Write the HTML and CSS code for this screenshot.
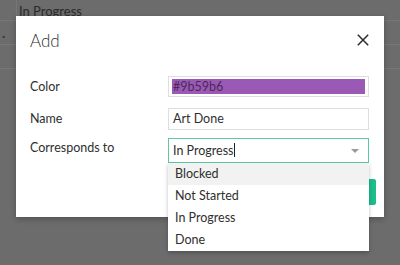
FILE: index.html
```html
<!DOCTYPE html>
<html lang="en">
<head>
  <meta charset="UTF-8">
  <meta name="viewport" content="width=device-width, initial-scale=1.0">
  <title>Add status</title>
  <link rel="stylesheet" href="styles.css">
</head>
<body>
  <div class="backdrop">
    <div class="bg-row first"><span class="bg-cell bg-first"></span><span class="bg-cell">In Progress</span></div>
    <div class="bg-row"><span class="bg-cell bg-first">·</span><span class="bg-cell"></span></div>
    <div class="bg-row"><span class="bg-cell bg-first"></span><span class="bg-cell"></span></div>
  </div>

  <div class="modal">
    <div class="modal-header">
      <span class="modal-title">Add</span>
      <svg class="close" width="12" height="12" viewBox="0 0 12 12">
        <path d="M0.8 0.8 L11.2 11.2 M11.2 0.8 L0.8 11.2" stroke="#2b2b2b" stroke-width="1.5" fill="none"/>
      </svg>
    </div>

    <div class="modal-body">
      <div class="form-row color-row">
        <label>Color</label>
        <div class="field color-field"><span class="swatch">#9b59b6</span></div>
      </div>
      <div class="form-row">
        <label>Name</label>
        <div class="field">Art Done</div>
      </div>
      <div class="form-row">
        <label class="top">Corresponds to</label>
        <div class="select-wrap">
          <div class="field select">In Progress<span class="cursor"></span>
            <span class="caret"></span>
          </div>
          <ul class="dropdown">
            <li class="active">Blocked</li>
            <li>Not Started</li>
            <li>In Progress</li>
            <li>Done</li>
          </ul>
        </div>
      </div>
    </div>

    <div class="modal-footer">
      <button class="btn-save">Save</button>
    </div>
  </div>
</body>
</html>
```

FILE: styles.css
```css
body {
  margin: 0;
  width: 400px;
  height: 265px;
  overflow: hidden;
  background: #6c6c6c;
  font-family: Lato, "Open Sans", "Liberation Sans", sans-serif;
  position: relative;
}

.bg-row {
  display: flex;
  height: 23px;
  border-bottom: 1px solid #767676;
}

.bg-row.first {
  height: 20px;
}

.bg-cell {
  font-size: 13px;
  color: #2b2b2b;
  padding-left: 2px;
  line-height: 22px;
}

.bg-first {
  width: 14px;
  border-right: 1px solid #767676;
  color: #333;
  line-height: 30px;
}

.modal {
  position: absolute;
  left: 16px;
  top: 16px;
  width: 368px;
  height: 201px;
  background: #ffffff;
  box-shadow: 0 2px 6px rgba(0, 0, 0, 0.25);
}

.modal-header {
  display: flex;
  align-items: center;
  justify-content: space-between;
  height: 48px;
  padding: 0 15px 0 14px;
}

.modal-title {
  font-size: 17px;
  font-weight: 300;
  color: #2f2f2f;
}

.modal-body {
  padding: 12px 15px 0 14px;
}

.form-row {
  display: flex;
  align-items: flex-start;
  margin-bottom: 8px;
}

.form-row.color-row {
  margin-bottom: 10px;
}

.form-row label {
  width: 138px;
  font-size: 12.5px;
  color: #2f2f2f;
  line-height: 22px;
}

.form-row label.top {
  line-height: 20px;
}

.field {
  box-sizing: border-box;
  width: 201px;
  height: 22px;
  border: 1px solid #dedede;
  font-size: 12.5px;
  color: #2f2f2f;
  padding: 0 4px;
  line-height: 20px;
}

.color-field {
  height: 21px;
  padding: 2px 3px;
}

.swatch {
  display: block;
  height: 15px;
  background: #9b59b6;
  color: #4a2a57;
  line-height: 15px;
  padding-left: 1px;
}

.select-wrap {
  position: relative;
}

.select {
  height: 25px;
  line-height: 23px;
  border-color: #5fc6a6;
  position: relative;
}

.cursor {
  display: inline-block;
  width: 1px;
  height: 14px;
  background: #222;
  vertical-align: -2px;
}

.caret {
  position: absolute;
  right: 9px;
  top: 10px;
  border-left: 4px solid transparent;
  border-right: 4px solid transparent;
  border-top: 4px solid #999;
}

.dropdown {
  position: absolute;
  left: 0;
  top: 25px;
  width: 201px;
  margin: 0;
  padding: 0;
  list-style: none;
  background: #fff;
  box-shadow: 0 2px 4px rgba(0, 0, 0, 0.25);
  z-index: 2;
}

.dropdown li {
  height: 22px;
  line-height: 22px;
  padding-left: 7px;
  font-size: 12.5px;
  color: #2f2f2f;
}

.dropdown li.active {
  background: #f2f2f2;
}

.modal-footer {
  display: flex;
  justify-content: flex-end;
  padding: 0 8px;
  margin-top: 16px;
}

.btn-save {
  width: 70px;
  height: 26px;
  border: none;
  border-radius: 2px;
  background: #1dbd8c;
  color: #fff;
  font-size: 13px;
}
```
